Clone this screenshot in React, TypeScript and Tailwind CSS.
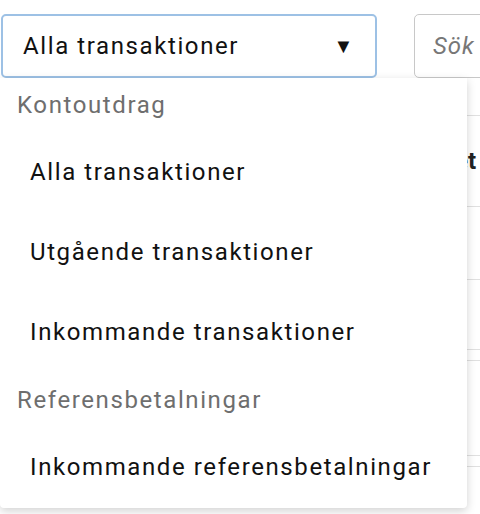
const groups = [
  {
    label: 'Kontoutdrag',
    items: ['Alla transaktioner', 'Utgående transaktioner', 'Inkommande transaktioner'],
  },
  {
    label: 'Referensbetalningar',
    items: ['Inkommande referensbetalningar'],
  },
];

// rows of the table that sits behind the open menu
const rows = ['h-[91px]', 'h-[73px]', 'h-[70px]', 'h-[11px]', 'h-[95px]', 'h-[11px]', 'h-[60px]'];

export default function App() {
  return (
    <div className="relative w-[480px] h-[514px] overflow-hidden bg-white font-['Roboto',sans-serif]">
      <div className="flex items-start pt-[14px] pl-px gap-[37px]">
        <button className="flex items-center justify-between w-[376px] h-[64px] shrink-0 border-2 border-[#9dc1e5] rounded-[5px] pl-5 pr-5 text-[24px] tracking-[1.6px] text-[#111]">
          <span>Alla transaktioner</span>
          <span className="text-[20px]">▼</span>
        </button>
        <div className="flex items-center w-[200px] h-[64px] shrink-0 border border-[#c8c8c8] rounded-[5px] pl-[18px] text-[24px] tracking-[1px] italic text-[#777]">
          Sök
        </div>
      </div>

      <div className="flex justify-end w-[480px] mt-[37px]">
        <div className="w-[180px] border-t border-[#e0e0e0]">
          {rows.map((h, i) => (
            <div key={i} className={`${h} flex items-center justify-end pr-[4px] border-b border-[#e0e0e0] text-[24px] font-bold text-[#222]`}>
              {i === 0 ? 'Debet' : ''}
            </div>
          ))}
        </div>
      </div>

      <div className="absolute left-0 top-[78px] w-[467px] h-[430px] bg-white rounded-b-[4px] shadow-[0_3px_10px_rgba(0,0,0,0.18)] text-[24px] tracking-[1.6px]">
        {groups.map((g, gi) => (
          <div key={g.label}>
            <div className={`${gi === 0 ? 'h-[54px]' : 'h-[55px]'} flex items-center pl-[17px] text-[#6e6e6e]`}>
              {g.label}
            </div>
            {g.items.map((it) => (
              <div key={it} className="h-20 flex items-center pl-[30px] text-[#111]">
                {it}
              </div>
            ))}
          </div>
        ))}
      </div>
    </div>
  );
}
